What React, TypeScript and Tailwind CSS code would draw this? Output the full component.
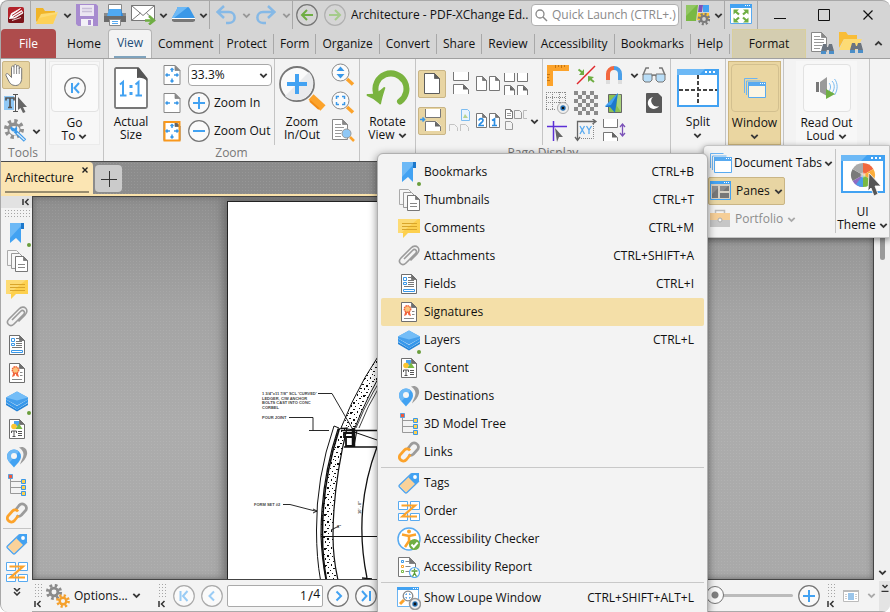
import React, { useState } from "react";
import clsx from "clsx";

function Svg({ w = 22, h, children }: { w?: number; h?: number; children: React.ReactNode }) {
  return (
    <svg width={w} height={h ?? w} viewBox={`0 0 ${w} ${h ?? w}`} fill="none" className="block shrink-0" aria-hidden="true">
      {children}
    </svg>
  );
}

// A sheet of paper with a folded corner
function Sheet({ x, y, w, h, f = 4, c = "#777" }: { x: number; y: number; w: number; h: number; f?: number; c?: string }) {
  return (
    <>
      <path d={`M${x} ${y}h${w - f}l${f} ${f}v${h - f}h${-w}z`} fill="#fff" stroke={c} />
      <path d={`M${x + w - f} ${y}v${f}h${f}z`} fill={c} stroke={c} strokeWidth={0.8} />
    </>
  );
}

function Chevron({ color = "#3a3a3a", up = false }: { color?: string; up?: boolean }) {
  return (
    <svg width="9" height="7" viewBox="0 0 9 7" className={clsx("inline-block shrink-0", up && "rotate-180")} fill="none" aria-hidden="true">
      <path d="M1.3 1.8 4.5 5l3.2-3.2" stroke={color} strokeWidth="1.8" />
    </svg>
  );
}

const Gear = ({ cx, cy, r, color, hole = "#f3f3f3" }: { cx: number; cy: number; r: number; color: string; hole?: string }) => (
  <>
    <circle cx={cx} cy={cy} r={r} stroke={color} strokeWidth={r * 0.5} strokeDasharray={`${r * 0.4} ${r * 0.385}`} />
    <circle cx={cx} cy={cy} r={r * 0.82} fill={color} />
    <circle cx={cx} cy={cy} r={r * 0.38} fill={hole} />
  </>
);

/* ---------- pane icons ---------- */

const BookmarkIcon = () => (
  <Svg>
    <path d="M4 1h14v6h-3v14l-5-5-6 5z" fill="#42a2f2" />
    <path d="M4 1h11v3L4 16z" fill="#6db9f6" />
    <path d="M15 1h3v6h-3z" fill="#1d78cb" />
  </Svg>
);

const ThumbnailsIcon = () => (
  <Svg>
    <path d="M1.500 15.500V.5h9l3 3" stroke="#aaa" fill="#f7f7f7" />
    <path d="M1.500 15.500H5" stroke="#aaa" />
    <path d="M5.500 18.500v-15h8l3 3M5.500 18.500H9" stroke="#999" fill="#f7f7f7" />
    <Sheet x={9.5} y={6.5} w={12} h={15} />
    <path d="M12 14.500h7M12 17.500h7" stroke="#888" />
  </Svg>
);

const CommentsIcon = () => (
  <Svg>
    <path d="M0 2h22v14H10l-5 5v-5H0z" fill="#fdd04e" />
    <path d="M0 2h20L3 16H0z" fill="#fddb74" />
    <path d="M4 6.500h15M4 9.500h15M4 12.500h15" stroke="#d9a52a" />
  </Svg>
);

const ClipIcon = () => (
  <Svg>
    <path d="M6 14 14.500 5.500c2.500-2.500 5.500.5 3 3L8 18c-4 4-9-1-5-5L13 3c5-5 11 1 6 6l-6.500 6.500" stroke="#9b9b9b" strokeWidth="1.6" />
  </Svg>
);

const FieldsIcon = () => (
  <Svg>
    <Sheet x={3.5} y={1.5} w={15} h={19} f={5} c="#6e6e6e" />
    <path d="M5.500 4.500h3v3h-3zM5.500 9.500h3v2h-3zM5.500 16.500h11v2h-11z" stroke="#3a98e8" />
    <path d="M10 4.500h3M10 7.500h6M10 9.500h6M10 11.500h6M6 13.500h10" stroke="#777" />
  </Svg>
);

const SignaturesIcon = () => (
  <Svg>
    <Sheet x={3.5} y={1.5} w={15} h={19} f={5} c="#6e6e6e" />
    <path d="m7.500 10-1.500 5 2.500-1 1-3 1 3 2.500 1-1.500-5z" fill="#f1633c" />
    <circle cx="9.500" cy="8" r="3.200" fill="#fcc27c" stroke="#f1633c" strokeWidth="1.500" strokeDasharray="1.500 .6" />
    <path d="M14 10.500h2.500M14 13.500h2.500M6 17.500h10" stroke="#888" />
  </Svg>
);

const LayersIcon = () => (
  <Svg>
    <path d="m0 13 11 6.500L22 13v2l-11 6.500L0 15z" fill="#2584d8" />
    <path d="m0 9.500 11 6.500 11-6.500v3L11 19.500 0 12.500z" fill="#3698ec" />
    <path d="m11 1.500 11 6v2l-11 6-11-6v-2z" fill="#459fec" />
    <path d="m11 1.500 11 6-11 3L0 7.500z" fill="#74bdf7" />
  </Svg>
);

const ContentIcon = () => (
  <Svg>
    <Sheet x={3.5} y={1.5} w={15} h={19} f={5} c="#6e6e6e" />
    <path d="M8 3h5v5H8z" fill="#4aa5f1" />
    <circle cx="8" cy="8.500" r="2.800" fill="#fbc531" />
    <path d="m13 5.500 3.500 5.500H9.500z" fill="#79b943" />
    <path d="M5.500 15v-2h5v2M8 13v5M6.500 18.500h3M12 13.500h4M12 15.500h4M12 17.500h4" stroke="#555" />
  </Svg>
);

const DestinationsIcon = () => (
  <Svg>
    <path d="M13 1.500c5-2 9 2 8 7-.7 4-4 7-7 10 1-4 3.500-7 3.500-10 0-3-1.500-5-4.500-7z" fill="#9b9b9b" />
    <path d="M8 3.500a7 7 0 0 1 7 7c0 4-4.500 8-7 11-2.500-3-7-7-7-11a7 7 0 0 1 7-7z" fill="#42a2f2" />
    <path d="M8 3.500a7 7 0 0 0-7 7c0 2 1 4 2.500 6L13 5.500a7 7 0 0 0-5-2z" fill="#6db9f6" />
    <circle cx="8" cy="10" r="3" fill="#f6f6f6" />
  </Svg>
);

const TreeIcon = () => (
  <Svg>
    <path d="M4.500 5v14.500H15M4.500 7.500H15M4.500 13.500H15" stroke="#999" />
    <path d="M2.500.5h4v4h-4z" fill="#f1593a" stroke="#5a9fdc" />
    <path d="M15.500 5.500h4v4h-4zM15.500 11.500h4v4h-4zM15.500 17.500h4v4h-4z" fill="#fdd04e" stroke="#3a98e8" />
  </Svg>
);

const LinksIcon = () => (
  <Svg>
    <path d="m9.500 8 3.500-4.500c3-3.500 9-.5 7 4.500l-4.500 5c-1.500 1.500-3.500 1.500-5 .5" stroke="#9b9b9b" strokeWidth="2.700" />
    <path d="m12.500 13.500-4 5c-3 3.500-9 0-6.500-4.500l4.500-5c1.500-1.500 4-1.500 5.500.5" stroke="#fca32b" strokeWidth="2.700" />
  </Svg>
);

const TagsIcon = () => (
  <Svg>
    <path d="M12 3.500 1.500 13.500l6.500 7L19.500 11z" fill="#fad29a" />
    <path d="M13.500 1H21v8l-3.500 3.500-7-7z" fill="#42a2f2" />
    <path d="M13.500 1.500 1.500 13q-1 1 0 2l5.500 5.500q1 1 2 0L21 9" stroke="#4fa3ec" strokeWidth="1.300" />
    <circle cx="17" cy="5" r="1.900" fill="#fff" />
  </Svg>
);

const OrderIcon = () => (
  <Svg>
    <path d="M.5 1.500h9v8h-9zM12.500 1.500h9v8h-9zM.5 13.500h9v7h-9zM12.500 13.500h9v7h-9z" fill="#fff" stroke="#58aaf0" />
    <path d="M3.500 5.500H17L4.500 16.500H19" stroke="#fca32b" strokeWidth="2.200" />
  </Svg>
);

const CheckerIcon = () => (
  <Svg w={24}>
    <circle cx="12" cy="12" r="11" fill="#fff" stroke="#58aaf0" strokeWidth="1.500" />
    <circle cx="12" cy="4.500" r="2" fill="#fca32b" />
    <path d="M5 7.500 12 9l7-1.500M12 9v5l-4 6M12 13l3 5" stroke="#fca32b" strokeWidth="2.500" />
    <circle cx="17.500" cy="17.500" r="5.500" fill="#6fae43" />
    <path d="m14.500 17.500 2.200 2.500 4-4.500" stroke="#fff" strokeWidth="2" />
  </Svg>
);

const ReportIcon = () => (
  <Svg>
    <Sheet x={0.5} y={1.5} w={17} h={19} f={6} c="#777" />
    <path d="M3.500 4.500h2v2h-2z" stroke="#3a98e8" />
    <path d="M3.500 9.500h2v2h-2z" stroke="#fca32b" />
    <path d="M3.500 14.500h2v2h-2z" stroke="#79b943" />
    <path d="M7.500 5.500h4M7.500 10.500h5M7.500 15.500h4" stroke="#888" />
    <circle cx="16.500" cy="16.500" r="5" fill="#fff" stroke="#58aaf0" strokeWidth="1.200" />
    <path d="M13.500 15h6M16.500 15v2l-2 3.500M16.500 17l2 3.500M16.500 12.500v1.500" stroke="#5b9e36" strokeWidth="1.300" />
  </Svg>
);

const LoupeIcon = () => (
  <Svg w={24}>
    <path d="M.5 1.500h21v19H.5z" fill="#fff" stroke="#6cb4f2" />
    <path d="M0 1h22v3H0z" fill="#42a2f2" />
    <path d="M16 2.500h1M18 2.500h1M20 2.500h1" stroke="#fff" />
    <path d="m3 18 4-4" stroke="#fca32b" strokeWidth="3" />
    <circle cx="11" cy="10" r="4.800" fill="#fff" stroke="#888" strokeWidth="1.300" />
    <path d="M9 9V8h1M12 8h1v1M13 11v1h-1M10 12H9v-1" stroke="#2b8de2" />
    <circle cx="18" cy="18" r="5.500" fill="#eee" stroke="#999" strokeWidth="1.500" />
    <circle cx="18" cy="18" r="2.700" fill="#2573b8" />
    <circle cx="18" cy="18" r="1.400" fill="#111" />
  </Svg>
);

/* ---------- title bar icons ---------- */

const AppIcon = () => (
  <Svg w={18}>
    <rect x="1" y="1" width="16" height="16" rx="2" fill="#b3232b" />
    <path d="M1 12 17 5v10a2 2 0 0 1-2 2H3a2 2 0 0 1-2-2z" fill="#7b151b" />
    <path d="m2.500 12.500 2-5 9-5-7 6.500zM2.500 12.500l4-3.500 8-4.500 1.500 2.500-8 5zM5 14.500l9-3" stroke="#fff" fill="#fff" strokeWidth=".8" />
    <path d="m5 9.500 8.500-5.500M6.500 11 15 6" stroke="#a31f27" strokeWidth=".9" />
  </Svg>
);

const OpenIcon = () => (
  <Svg w={24} h={20}>
    <path d="M1 3h7l2 3h10v4L3 18 1 16z" fill="#f0b429" />
    <path d="m6 9 17-2-5 12H1z" fill="#fddb74" />
    <path d="M18 19h-17l3-6 18-4z" fill="#fdd158" />
  </Svg>
);

const SaveIcon = () => (
  <Svg>
    <path d="M0 0h20l2 2v20H2l-2-2z" fill="#a78bcf" />
    <path d="M4 1h14v11H4z" fill="#ebe6f2" />
    <path d="M6 4.500h10M6 7.500h10" stroke="#c7bdd8" strokeWidth="1.500" />
    <path d="M5 15h12v7H5z" fill="#f3f0f7" />
    <path d="M12 16h3v5h-3z" fill="#a78bcf" />
  </Svg>
);

const PrintIcon = () => (
  <Svg>
    <path d="M4.500.5h13v7h-13z" fill="#fff" stroke="#888" />
    <path d="M0 9h22v9H0z" fill="#6b6b6b" />
    <path d="M0 9h4v3H0zM18 9h4v3h-4z" fill="#8b8b8b" />
    <path d="M5 5h12v7H3z" fill="#4fa9f2" />
    <path d="M17 5v7h2z" fill="#2e8be0" />
    <path d="M5.500 15.500h11v6h-11z" fill="#fff" stroke="#888" />
    <path d="M8 17.500h6M8 19.500h6" stroke="#58aaf0" />
  </Svg>
);

const MailIcon = () => (
  <Svg w={25} h={20}>
    <path d="M.5.5h23v15H.5z" fill="#fff" stroke="#777" />
    <path d="m.5.5 11.500 10 11.500-10M.5 15.500l9-7.500M23.500 15.500l-8-7.500" stroke="#777" />
    <path d="M14 15.500h7M18 11l5 4.500-5 4" stroke="#6fae43" strokeWidth="2.500" />
  </Svg>
);

const ScanIcon = () => (
  <Svg w={25} h={18}>
    <path d="M7 1h10q1 0 2 2l5 9H1l5-9q0-2 1-2z" fill="#3a98e8" />
    <path d="M7 1h10L3 12H1l5-9q0-2 1-2z" fill="#6db9f6" />
    <path d="M1 12h23v1.500H1z" fill="#fff" />
    <path d="M1 13h23v2l-2 1H3l-2-1z" fill="#777" />
  </Svg>
);

const UndoIcon = () => (
  <Svg w={20} h={20}>
    <path d="M8 1 1.500 7 8 13M2 7h11c7.500 0 7.500 11 0 11h-3" stroke="#86b9e6" strokeWidth="2.500" />
  </Svg>
);

const RedoIcon = () => (
  <Svg w={20} h={20}>
    <path d="m12 1 6.500 6-6.500 6M18 7H7c-7.500 0-7.500 11 0 11h3" stroke="#86b9e6" strokeWidth="2.500" />
  </Svg>
);

const NavArrowIcon = ({ back }: { back?: boolean }) => (
  <Svg>
    <circle cx="11" cy="11" r="10.300" stroke={back ? "#777" : "#b0b0b0"} strokeWidth="1.200" />
    <path d={back ? "M17 11H6M11 6l-5 5 5 5" : "M5 11h11M11 6l5 5-5 5"} stroke={back ? "#6fae43" : "#a5cb8b"} strokeWidth="2" />
  </Svg>
);

const UiOptionsIcon = () => (
  <Svg w={24}>
    <path d="M0 2h12L10 18H0z" fill="#79b943" />
    <path d="M0 2h11L0 13z" fill="#92c763" />
    <path d="M13 2h4l-1 7h-4z" fill="#7b52b8" />
    <path d="M17 2h6v7h-6z" fill="#42a2f2" />
    <path d="M12 10h11v7H11z" fill="#fbc531" />
    <Gear cx={18} cy={16} r={5} color="#7b7b7b" hole="#d5d5d5" />
  </Svg>
);

const FullScreenIcon = () => (
  <Svg>
    <path d="M.5.5h21v19H.5z" fill="#fff" stroke="#58aaf0" />
    <path d="M0 0h22v4H0z" fill="#42a2f2" />
    <path d="M15 1.500h1M17 1.500h1M19 1.500h1" stroke="#fff" />
    <path d="m5 7 4 3.500M17 7l-4 3.500M5 17l4-3.500M17 17l-4-3.500" stroke="#6fae43" strokeWidth="2.300" />
    <path d="M3.500 5.500H9l-5.500 5zM18.500 5.500H13l5.500 5zM3.500 18.500H9l-5.500-5zM18.500 18.500H13l5.500-5z" fill="#6fae43" />
  </Svg>
);

const Binoculars = ({ x, y }: { x: number; y: number }) => (
  <g transform={`translate(${x} ${y})`}>
    <path d="M2 0h3l1 3h1l1-3h3l2 7v3H8V6H5v4H0V7z" fill="#6b7480" />
    <path d="M0 7h5v3H0zM8 7h5v3H8z" fill="#4b8ec8" />
  </g>
);

const FindIcon = () => (
  <Svg w={24}>
    <Sheet x={1.5} y={0.5} w={15} h={19} f={5} c="#888" />
    <path d="M4 4.500h6M4 7.500h10M4 10.500h10M4 13.500h8M4 16.500h6" stroke="#999" />
    <Binoculars x={11} y={12} />
  </Svg>
);

const FindFolderIcon = () => (
  <Svg w={26}>
    <path d="M2 1h7l2 3h9v4H7L2 17z" fill="#f9bd37" />
    <path d="M7 8h18l-6 11H2z" fill="#fddb74" />
    <Binoculars x={13} y={12} />
  </Svg>
);

/* ---------- ribbon icons ---------- */

const HandIcon = () => (
  <Svg w={24}>
    <path
      d="M7.500 12V4.500c0-2 2.500-2 2.500 0V3c0-2 2.600-2 2.600 0v1c0-2 2.600-2 2.600 0v2c0-2 2.500-2 2.500 0v9c0 4-2 7.500-6 7.500-4.500 0-6-2.500-7.500-5.500L2 12.500c-.8-2 1.500-2.500 2.500-1.200l3 3.200z"
      fill="#fff"
      stroke="#777"
    />
    <path d="M10 4.500V11M12.600 4v7M15.200 6v5" stroke="#888" />
  </Svg>
);

const SelectTextIcon = () => (
  <Svg w={26} h={22}>
    <path d="M1 4h10v14H1z" fill="#8fc8f6" />
    <path d="M3 8.500V6h8v2.500M7 6v9M5 15.500h4" stroke="#555" strokeWidth="1.700" />
    <path d="M10 2.500h5M12.500 3v16M10 19.500h5" stroke="#555" />
    <path d="m15 5 9 10h-4l2.500 5-2.500 1-2.500-5-2.500 2z" fill="#666" />
  </Svg>
);

const WrenchIcon = () => (
  <Svg w={24}>
    <Gear cx={10} cy={10} r={8} color="#8f8f8f" />
    <path d="M5.500 10a5 5 0 1 0 8-3l-2.500 3-2-1z" fill="#f3f3f3" />
    <path d="m11 12 10 9.500" stroke="#3a98e8" strokeWidth="3.500" />
    <path d="m13 14 7.500 7" stroke="#d8ecfc" strokeWidth="1.300" />
    <path d="M7 7.500c-2 3 2 6.500 5 4.500 1.500-1 1.500-3 .5-4.500l-2 2-2-1z" fill="#3a98e8" />
  </Svg>
);

const CircleIcon = ({ d, color = "#42a2f2", ring = "#777" }: { d: string; color?: string; ring?: string }) => (
  <Svg>
    <circle cx="11" cy="11" r="10.300" fill="#fafafa" stroke={ring} strokeWidth="1.200" />
    <path d={d} stroke={color} strokeWidth="2" />
  </Svg>
);

const ActualSizeIcon = () => (
  <Svg w={34} h={42}>
    <path d="M1 2.500Q1 1 2.500 1H24l9 11v27.500q0 1.500-1.500 1.500h-29Q1 41 1 39.500z" fill="#fff" stroke="#777" strokeWidth="1.800" />
    <path d="M23 1h2l8 10v3q-4-4-10-3z" fill="#555" />
    <path d="m6 17.500 3-2.500v14M6 28.500h6.500M21.500 17.500l3-2.500v14M21.500 28.500H28" stroke="#42a2f2" strokeWidth="2" />
    <path d="M15.500 18h3v3h-3zM15.500 25h3v3h-3z" fill="#42a2f2" />
  </Svg>
);

const FitIcon = ({ mode }: { mode: "page" | "width" | "visible" }) => (
  <Svg w={18} h={22}>
    <Sheet x={1} y={1.5} w={16} h={19} f={5} c={mode === "visible" ? "#666" : "#888"} />
    {mode === "visible" && <path d="M1.500 2h15v18.500h-15z" stroke="#f9981c" strokeWidth="2" />}
    {mode !== "width" && <path d="M9 4.500V8M7.500 6 9 4.500 10.500 6M9 18v-3.500M7.500 16.500 9 18l1.500-1.500" stroke="#3a98e8" strokeWidth="1.500" />}
    <path d="M3 11h4M4.500 9.500 3 11l1.500 1.500M15 11h-4M13.500 9.500 15 11l-1.500 1.500" stroke="#3a98e8" strokeWidth="1.500" />
  </Svg>
);

const ZoomBigIcon = () => (
  <Svg w={48} h={46}>
    <path d="m33 32 12 11" stroke="#fca32b" strokeWidth="7.500" />
    <path d="m32 36 9 8" stroke="#f18c16" strokeWidth="2" />
    <circle cx="19" cy="19" r="17" fill="#fafafa" stroke="#777" strokeWidth="1.800" />
    <path d="M31 7A17 17 0 0 1 7 31z" fill="#e9eaec" />
    <path d="M9 19h20M19 9v20" stroke="#42a2f2" strokeWidth="4" />
  </Svg>
);

const SmallLens = ({ children }: { children: React.ReactNode }) => (
  <Svg w={24}>
    <path d="m16 16 6 5.500" stroke="#fca32b" strokeWidth="3.500" />
    <circle cx="9.500" cy="9.500" r="8.500" fill="#fbfbfb" stroke="#888" />
    {children}
  </Svg>
);

const PageLensIcon = () => (
  <Svg w={24}>
    <Sheet x={1.5} y={0.5} w={15} h={20} f={5} c="#888" />
    <path d="M4 5.500h6M4 8.500h9M4 11.500h7M4 14.500h6M4 17.500h6" stroke="#999" />
    <path d="m19 18 4 4" stroke="#fca32b" strokeWidth="2.500" />
    <circle cx="15.500" cy="14.500" r="4.500" fill="#8fc8f6" stroke="#999" />
  </Svg>
);

const RotateIcon = () => (
  <Svg w={44} h={38}>
    <path d="M10 24A15.500 15.500 0 1 1 34 32.500" stroke="#7ab33f" strokeWidth="6" strokeLinecap="round" />
    <path d="M1 25q9 1 17-7 2 0 1 2-3 9-4 15-1 1-2-.5-5-5-12-7.500-1-1 0-2z" fill="#7ab33f" />
  </Svg>
);

const OpenDot = () => <span className="absolute right-0 bottom-0 size-1 rounded-full bg-[#6a9d3c]" />;

const SinglePage = () => (
  <Svg w={18} h={22}>
    <Sheet x={1.5} y={0.5} w={15} h={20} f={5} c="#5c5c5c" />
  </Svg>
);

const ContinuousPage = ({ arrow }: { arrow?: boolean }) => (
  <Svg w={24}>
    <path d="M5 0h16v9H5zM5 12h11l5 5v5H5z" fill="#fff" />
    <path d="M5.500 0v8.500h15V0M5.500 22v-9.500h10l5 5V22" stroke="#777" />
    <path d="M15 12.500v5h5.500z" fill="#666" />
    {arrow && <path d="M0 10.500h4M2.500 8.500l2 2-2 2" stroke="#3a98e8" strokeWidth="1.600" />}
  </Svg>
);

const TwoPages = ({ numbered }: { numbered?: boolean }) => (
  <Svg w={26} h={18}>
    <Sheet x={1.5} y={1.5} w={10} h={14} />
    <Sheet x={14.5} y={1.5} w={10} h={14} />
    {numbered && (
      <path d="M4 8.500c0-2.500 4-2.500 4 0 0 2-4 3-4 5h5M17 8.500l2.500-1.500v6.500M17 13.500h5" stroke="#2b8de2" strokeWidth="1.700" />
    )}
  </Svg>
);

const TwoContinuous = () => (
  <Svg w={26} h={22}>
    <path d="M1.500 0v8.500h10V0M14.500 0v8.500h10V0" fill="#fff" stroke="#777" />
    <path d="M1.500 22v-9.500h6l4 4V22M14.500 22v-9.500h6l4 4V22" fill="#fff" stroke="#777" />
    <path d="M7 12.500v5h5zM20 12.500v5h5z" fill="#666" />
  </Svg>
);

const SplitPagesIcon = () => (
  <Svg w={24}>
    <path d="M13.500.5h6l2 2v9h-8z" fill="#eaf4fd" stroke="#7dbcf0" />
    <path d="m15 9 2-4 3 4z" fill="#b7d38f" />
    <path d="M1.500 22v-6.500h5l3 3V22M12.500 22v-6.500h5l3 3V22" stroke="#c3c3c3" />
  </Svg>
);

const PageLayoutIcon = () => (
  <Svg w={24}>
    <Sheet x={1.5} y={0.5} w={7} h={9} f={2} />
    <path d="M3 4.500h4M3 6.500h4" stroke="#999" />
    <path d="M10.500 1.500h5l2 2v6h-7zM1.500 12.500h5l2 2v6h-7z" stroke="#999" />
    <path d="M23 1.500h-3.500v8H23" stroke="#bbb" />
  </Svg>
);

const RulerIcon = () => (
  <Svg>
    <path d="M0 1h22v6H6v15H0z" fill="#fca32b" />
    <path d="M8.500 1v3M11.500 1v2M14.500 1v3M17.500 1v2M0 10.500h3M0 13.500h2M0 16.500h3" stroke="#c77611" />
  </Svg>
);

const GuidesIcon = () => (
  <Svg w={20}>
    <path d="M1 19 19 1" stroke="#e0262b" strokeWidth="1.500" />
    <path d="M2.500 4.500 7 8M18 17l-5-4" stroke="#6fae43" strokeWidth="2" />
    <path d="M8 4v6H3zM12 11v6l6-5z" fill="#6fae43" />
  </Svg>
);

const MagnetIcon = () => (
  <Svg w={18} h={20}>
    <path d="M3 17V9a6 6 0 0 1 6-6" stroke="#f2683f" strokeWidth="4" />
    <path d="M15 17V9a6 6 0 0 0-6-6" stroke="#4a9fe8" strokeWidth="4" />
    <path d="M1 15h4v4H1zM13 15h4v4h-4z" fill="#ddd" />
  </Svg>
);

const GlassesIcon = () => (
  <Svg w={24} h={18}>
    <path d="M1 8h9v6l-2 2H3l-2-2zM14 8h9v6l-2 2h-5l-2-2z" fill="#b8ddf7" stroke="#777" />
    <path d="M10 10c1-1.500 3-1.500 4 0M1 9l3-7h3M23 9l-3-7h-3" stroke="#777" strokeWidth="1.500" />
  </Svg>
);

const GridEyeIcon = () => (
  <Svg w={24}>
    <path d="M0 1.500h20M0 6.500h20M0 11.500h20M0 18.500h10M.5 1v18M6.500 1v18M13.500 1v12M19.500 1v12" stroke="#888" strokeDasharray="1 1" />
    <circle cx="17" cy="17" r="5.500" fill="#eee" stroke="#aaa" />
    <circle cx="17" cy="17" r="2.700" fill="#2573b8" />
    <circle cx="17" cy="17" r="1.300" fill="#111" />
  </Svg>
);

const CheckerboardIcon = () => (
  <Svg w={24}>
    <defs>
      <pattern id="checks" width="8" height="8" patternUnits="userSpaceOnUse">
        <path d="M0 0h4v4H0zM4 4h4v4H4z" fill="#8b8b8b" />
      </pattern>
    </defs>
    <path d="M0 0h24v24H0z" fill="url(#checks)" />
  </Svg>
);

const WrapIcon = () => (
  <Svg w={18} h={22}>
    <path d="M3.500 2.500h13v18h-13z" fill="#8cc152" stroke="#666" />
    <path d="M12 2v12l4 6V3z" fill="#a9d37c" />
    <path d="M13 1 0 15h5l5 6z" fill="#1d78cb" />
    <path d="M13 1 0 14l6-1z" fill="#42a2f2" />
  </Svg>
);

const MoonIcon = () => (
  <Svg w={18} h={22}>
    <path d="M1 2q0-1 1-1h11l4 4v15q0 1-1 1H2q-1 0-1-1z" fill="#595959" />
    <path d="M8 5a6 6 0 1 0 6 9 5.500 5.500 0 0 1-6-9z" fill="#fff" />
  </Svg>
);

const CrossCursorIcon = () => (
  <Svg>
    <path d="M0 6.500h20M6.500 1v20" stroke="#5b2fd6" strokeWidth="1.500" />
    <path d="m8 8 8 9h-4l-2 5z" fill="#666" />
  </Svg>
);

const XyIcon = () => (
  <Svg w={24}>
    <path d="M3.500 20V2.500H21M18.500 0 22 2.500 18.500 5M1 18l2.500 3.500L6 18" stroke="#666" strokeWidth="1.300" />
    <path d="M19.500 5v14.500H6" stroke="#888" strokeDasharray="1 1" />
    <path d="m6 7 4.500 8M10.500 7 6 15M12.500 7l2.500 4 2.500-4M15 11v4" stroke="#58aaf0" strokeWidth="1.300" />
  </Svg>
);

const PageGapIcon = () => (
  <Svg w={24}>
    <path d="M1.500 0v8.500h14V0" fill="#fff" stroke="#777" />
    <path d="M1.500 22v-8.500h9l5 5V22" fill="#fff" stroke="#777" />
    <path d="M10 13v5.500h5.500z" fill="#666" />
    <path d="M20.500 6v10M18 8l2.500-3L23 8M18 14l2.500 3 2.500-3" stroke="#7b52b8" strokeWidth="1.300" />
  </Svg>
);

const SplitIcon = () => (
  <Svg w={42} h={38}>
    <rect x="1" y="1" width="40" height="36" fill="#fff" stroke="#42a2f2" strokeWidth="2" />
    <path d="M0 0h42v6H0z" fill="#42a2f2" />
    <path d="M0 0h28l-6 6H0z" fill="#6db9f6" />
    <path d="M28 3h2M32 3h2M36 3h2" stroke="#fff" strokeWidth="2" />
    <path d="M2 21h38M21 6v30" stroke="#444" strokeWidth="2" strokeDasharray="4 2" />
  </Svg>
);

const WindowsIcon = ({ fill = "#fff" }: { fill?: string }) => (
  <Svg w={22} h={20}>
    <path d="M.5 15V.5h13M2.500 17V3h14" stroke="#6cb4f2" />
    <path d="M4.500 5.500h17v14h-17z" fill={fill} stroke="#58aaf0" />
    <path d="M4 4h18v4H4z" fill="#58aaf0" />
    <path d="M16 5.500h1M18 5.500h1M20 5.500h1" stroke="#fff" />
  </Svg>
);

const SpeakerIcon = () => (
  <Svg w={24}>
    <path d="M1 6h3v10H1z" fill="#777" />
    <path d="m5 6 7-5v19l-7-4z" fill="#9a9a9a" />
    <path d="M14 7c2 2 2 6 0 8M17 5c3 3 3 8 0 12M19.500 3c3.500 4 3.500 11 0 16" stroke="#79bbf0" />
    <path d="m11 13 9 5-9 5z" fill="#6fae43" />
  </Svg>
);

const PanesIcon = () => (
  <Svg>
    <path d="M.5 1.500h20v18H.5z" fill="#d5d0c4" stroke="#42a2f2" />
    <path d="M0 1h21v3H0z" fill="#42a2f2" />
    <path d="M14 2.500h1M16 2.500h1M18 2.500h1" stroke="#fff" />
    <path d="M2 6h6v12H2zM10 6h9v5h-9zM10 13h9v5h-9z" fill="#777" />
    <path d="m2 14 6-6v-2H2zM10 6h8l-5 5h-3z" fill="#8d8d8d" />
  </Svg>
);

const PortfolioIcon = () => (
  <Svg>
    <path d="M6.500 6V2.500h9V6" stroke="#bbb" strokeWidth="1.500" />
    <path d="M1 5h20v7H1z" fill="#f5ce97" />
    <path d="M1 12h20v7H1z" fill="#c6c6c6" />
    <circle cx="11" cy="12" r="2" fill="#f5f5f5" stroke="#aaa" />
  </Svg>
);

const UiThemeIcon = () => (
  <Svg w={44} h={42}>
    <path d="M1 1h42v36H1z" fill="#fff" stroke="#42a2f2" strokeWidth="2" />
    <path d="M0 0h44v6H0z" fill="#42a2f2" />
    <path d="M0 0h26l-6 6H0z" fill="#6db9f6" />
    <path d="M30 3h2M34 3h2M38 3h2" stroke="#fff" strokeWidth="2" />
    <path d="M22 20V8a12 12 0 0 1 10.400 6z" fill="#f2683f" />
    <path d="M22 20l10.400-6a12 12 0 0 1 0 12z" fill="#fcae3c" />
    <path d="M22 20l10.400 6A12 12 0 0 1 22 32z" fill="#79b943" />
    <path d="M22 20v12a12 12 0 0 1-10.400-6z" fill="#8f6cc4" />
    <path d="M22 20l-10.400 6a12 12 0 0 1 0-12z" fill="#7a7a7a" />
    <path d="M22 20 11.600 14A12 12 0 0 1 22 8z" fill="#aaa" />
    <path d="M22 32a12 12 0 0 1-7-2.500L22 20z" fill="#4a9fe8" />
    <circle cx="22" cy="20" r="2.500" fill="#fff" fillOpacity=".5" />
    <path d="m28 18 12 13h-6l3 8-4 2-3-8-3 3z" fill="#555" stroke="#fff" strokeWidth=".8" />
  </Svg>
);

const OptionsIcon = () => (
  <Svg w={24}>
    <Gear cx={8} cy={8} r={6.5} color="#8b8b8b" />
    <Gear cx={17} cy={17} r={5.5} color="#f5a02c" />
  </Svg>
);

/* ---------- data ---------- */

const tabs = ["Comment", "Protect", "Form", "Organize", "Convert", "Share", "Review", "Accessibility", "Bookmarks", "Help"];

type Pane = { label: string; keys?: string; icon: () => React.ReactElement; dot?: boolean };

const panes: Pane[] = [
  { label: "Bookmarks", keys: "CTRL+B", icon: BookmarkIcon, dot: true },
  { label: "Thumbnails", keys: "CTRL+T", icon: ThumbnailsIcon },
  { label: "Comments", keys: "CTRL+M", icon: CommentsIcon },
  { label: "Attachments", keys: "CTRL+SHIFT+A", icon: ClipIcon },
  { label: "Fields", keys: "CTRL+I", icon: FieldsIcon },
  { label: "Signatures", icon: SignaturesIcon },
  { label: "Layers", keys: "CTRL+L", icon: LayersIcon, dot: true },
  { label: "Content", icon: ContentIcon },
  { label: "Destinations", icon: DestinationsIcon },
  { label: "3D Model Tree", icon: TreeIcon },
  { label: "Links", icon: LinksIcon },
];

const structurePanes: Pane[] = [
  { label: "Tags", icon: TagsIcon },
  { label: "Order", icon: OrderIcon },
];

const accessibilityPanes: Pane[] = [
  { label: "Accessibility Checker", icon: CheckerIcon },
  { label: "Accessibility Report", icon: ReportIcon },
];

/* ---------- window parts ---------- */

function IconButton({ label, className, children }: { label: string; className?: string; children: React.ReactNode }) {
  return (
    <button type="button" aria-label={label} className={clsx("flex shrink-0 items-center justify-center", className)}>
      {children}
    </button>
  );
}

const TitleRule = () => <span className="h-7 w-px shrink-0 bg-[#a8a8a8]" />;

function TitleBar() {
  return (
    <header className="flex h-7 items-center">
      <span className="flex w-[29px] shrink-0 justify-center"><AppIcon /></span>
      <TitleRule />
      <IconButton label="Open" className="w-8"><OpenIcon /></IconButton>
      <IconButton label="Recent files" className="w-2"><Chevron /></IconButton>
      <IconButton label="Save" className="w-8"><SaveIcon /></IconButton>
      <IconButton label="Print" className="w-6"><PrintIcon /></IconButton>
      <IconButton label="Send" className="w-8"><MailIcon /></IconButton>
      <IconButton label="Send options" className="w-2"><Chevron /></IconButton>
      <IconButton label="Scan" className="w-8"><ScanIcon /></IconButton>
      <IconButton label="Scan options" className="mr-0.5 w-2"><Chevron /></IconButton>
      <TitleRule />
      <IconButton label="Undo" className="w-8"><UndoIcon /></IconButton>
      <IconButton label="Undo list" className="w-2"><Chevron color="#999" /></IconButton>
      <IconButton label="Redo" className="w-8"><RedoIcon /></IconButton>
      <IconButton label="Redo list" className="mr-0.5 w-2"><Chevron color="#999" /></IconButton>
      <TitleRule />
      <IconButton label="Back" className="w-7"><NavArrowIcon back /></IconButton>
      <IconButton label="Forward" className="w-7"><NavArrowIcon /></IconButton>
      <h1 className="ml-0.5 min-w-0 flex-1 overflow-hidden whitespace-nowrap">Architecture - PDF-XChange Ed..</h1>
      <label className="mr-0.5 flex h-[22px] w-[148px] shrink-0 items-center gap-1 rounded-sm border border-[#b0b0b0] bg-white px-0.5">
        <Svg w={14}>
          <circle cx="6" cy="6" r="4" stroke="#888" strokeWidth="1.300" />
          <path d="m9 9 4 4" stroke="#888" strokeWidth="1.500" />
        </Svg>
        <input aria-label="Quick Launch" placeholder="Quick Launch (CTRL+.)" className="w-full min-w-0 bg-transparent outline-none placeholder:text-[#8a8a8a]" />
      </label>
      <TitleRule />
      <IconButton label="UI options" className="w-8"><UiOptionsIcon /></IconButton>
      <IconButton label="UI options list" className="mr-0.5 w-2"><Chevron /></IconButton>
      <TitleRule />
      <IconButton label="Full screen" className="w-8"><FullScreenIcon /></IconButton>
      <TitleRule />
      <IconButton label="Minimize" className="w-11"><Svg w={12}><path d="M0 9.500h12" stroke="#111" /></Svg></IconButton>
      <IconButton label="Maximize" className="w-11"><Svg w={12}><path d="M.5.5h11v11H.5z" stroke="#111" /></Svg></IconButton>
      <IconButton label="Close" className="w-11"><Svg w={10}><path d="m.5.5 9 9M9.500.5l-9 9" stroke="#111" strokeWidth="1.200" /></Svg></IconButton>
    </header>
  );
}

function TabRow() {
  return (
    <nav className="flex h-[30px] items-end border-b border-[#a0a0a0] whitespace-nowrap">
      <button type="button" className="h-[29px] w-[55px] shrink-0 rounded-t-sm bg-[#ae4c4c] text-white">File</button>
      <button type="button" className="h-[29px] w-[52px] shrink-0 pl-1">Home</button>
      <button type="button" className="flex h-[29px] w-11 shrink-0 flex-col items-center justify-between rounded-t-sm border border-b-0 border-[#b4b4b4] bg-[#f3f3f3] text-[#1e4e79]">
        <span className="pt-[5px]">View</span>
        <span className="h-0.5 w-8 bg-[#7fa3bd]" />
      </button>
      <div className="flex h-[29px] min-w-0 flex-1 items-center">
        {tabs.map((tab) => (
          <button key={tab} type="button" className="h-5 flex-auto border-r border-[#a8a8a8]">
            {tab}
          </button>
        ))}
      </div>
      <button type="button" className="ml-0.5 h-[29px] w-[74px] shrink-0 border border-b-0 border-[#d9cf9d] bg-[#d4cdb0]">Format</button>
      <IconButton label="Find" className="h-[29px] w-8"><FindIcon /></IconButton>
      <IconButton label="Search in files" className="h-[29px] w-6"><FindFolderIcon /></IconButton>
      <IconButton label="Collapse ribbon" className="h-[29px] w-7 pl-1"><Chevron up /></IconButton>
    </nav>
  );
}

const Rule = () => <span className="h-[86px] w-px shrink-0 bg-[#c4c4c4]" />;
const GroupRule = () => <span className="w-px shrink-0 self-stretch bg-[#c4c4c4]" />;

function Group({ label, children }: { label?: string; children: React.ReactNode }) {
  return (
    <section className="flex shrink-0 flex-col">
      <div className="flex h-[86px]">{children}</div>
      {label && <h2 className="text-center leading-4 text-[#777]">{label}</h2>}
    </section>
  );
}

// One or two lines; a one-line caption carries its arrow underneath
function Caption({ text, arrow }: { text: string; arrow?: boolean }) {
  return (
    <span className="text-center leading-[13px] whitespace-pre">
      {text}
      {arrow && (text.includes("\n") ? " " : "\n")}
      {arrow && <Chevron />}
    </span>
  );
}

// Tall ribbon command: drawing above, caption below
function BigButton({ icon, text, arrow, className }: { icon: React.ReactNode; text: string; arrow?: boolean; className?: string }) {
  return (
    <button type="button" className={clsx("flex shrink-0 flex-col items-center pt-1.5", className)}>
      <span className="mb-1 flex h-[46px] items-center">{icon}</span>
      <Caption text={text} arrow={arrow} />
    </button>
  );
}

function CardButton({ icon, text, active, className }: { icon: React.ReactNode; text: string; active?: boolean; className?: string }) {
  return (
    <button
      type="button"
      className={clsx(
        "mt-0.5 flex h-[84px] shrink-0 flex-col items-center border pt-0.5",
        active ? "border-[#cdb67f] bg-[#ead6a1]" : "border-[#ebebeb] bg-[#f7f7f7]",
        className,
      )}
    >
      <span className={clsx("mb-1 flex h-12 w-12 items-center justify-center rounded-sm border", active ? "border-[#d3c08f]" : "border-[#e2e2e2] bg-[#fafafa]")}>
        {icon}
      </span>
      <Caption text={text} arrow />
    </button>
  );
}

const cell = "h-7 w-7";
const pressed = "rounded-xs border border-[#c9b585] bg-[#e8d5a3]";

function Ribbon() {
  const [zoom, setZoom] = useState("33.3%");

  return (
    <div className="flex h-[103px] shrink-0 overflow-hidden border-b border-[#4a4a4a] bg-[#f3f3f3]">
      <Group label="Tools">
        <div className="flex w-[44px] flex-col pt-0.5 pl-px">
          <IconButton label="Hand tool" className={clsx(cell, pressed)}><HandIcon /></IconButton>
          <IconButton label="Select text" className={cell}><SelectTextIcon /></IconButton>
          <div className="flex items-center gap-0.5">
            <IconButton label="Other tools" className={cell}><WrenchIcon /></IconButton>
            <Chevron />
          </div>
        </div>
      </Group>
      <GroupRule />
      <Group>
        <CardButton className="mx-[3px] w-[51px]" icon={<CircleIcon d="M8 6v10M15 6l-4.500 5 4.500 5" />} text={"Go\nTo"} />
      </Group>
      <GroupRule />
      <Group label="Zoom">
        <BigButton className="w-[54px]" icon={<ActualSizeIcon />} text={"Actual\nSize"} />
        <div className="flex flex-col pt-0.5">
          <IconButton label="Fit page" className={cell}><FitIcon mode="page" /></IconButton>
          <IconButton label="Fit width" className={cell}><FitIcon mode="width" /></IconButton>
          <IconButton label="Fit visible" className={cell}><FitIcon mode="visible" /></IconButton>
        </div>
        <div className="flex w-[88px] flex-col pt-0.5 pl-0.5">
          <div className="flex h-7 items-center">
            <div className="relative w-[84px]">
              <select
                aria-label="Zoom level"
                value={zoom}
                onChange={(e) => setZoom(e.target.value)}
                className="block h-[22px] w-full appearance-none rounded-sm border border-[#a8a8a8] bg-white px-0.5 outline-none"
              >
                <option>33.3%</option>
                <option>50%</option>
                <option>100%</option>
              </select>
              <span className="pointer-events-none absolute inset-y-0 right-1 flex items-center"><Chevron /></span>
            </div>
          </div>
          <button type="button" className="flex h-7 items-center gap-1 whitespace-nowrap">
            <CircleIcon d="M5 11h12M11 5v12" />
            Zoom In
          </button>
          <button type="button" className="flex h-7 items-center gap-1 whitespace-nowrap">
            <CircleIcon d="M5 11h12" />
            Zoom Out
          </button>
        </div>
        <Rule />
        <BigButton className="w-[54px]" icon={<ZoomBigIcon />} text={"Zoom\nIn/Out"} />
        <div className="flex w-[30px] flex-col pt-0.5">
          <IconButton label="Dynamic zoom" className={cell}>
            <SmallLens><path d="m9.500 3.500 4 4.500h-8zM9.500 15.500l4-4.500h-8z" fill="#3a98e8" /></SmallLens>
          </IconButton>
          <IconButton label="Loupe" className={cell}>
            <SmallLens><path d="M5.500 8V5.500H8M11 5.500h2.500V8M13.500 11v2.500H11M8 13.500H5.500V11" stroke="#3a98e8" strokeWidth="1.500" /></SmallLens>
          </IconButton>
          <IconButton label="Pan and zoom" className={cell}><PageLensIcon /></IconButton>
        </div>
      </Group>
      <GroupRule />
      <Group>
        <BigButton className="w-[55px]" icon={<RotateIcon />} text={"Rotate\nView"} arrow />
      </Group>
      <GroupRule />
      <Group label="Page Display">
        <div className="flex w-[126px] flex-col gap-[9px] pt-[11px] pl-0.5">
          <div className="flex">
            <IconButton label="Single page" className={clsx(cell, pressed)}><SinglePage /></IconButton>
            <IconButton label="Continuous" className={cell}><ContinuousPage /></IconButton>
            <IconButton label="Two pages" className={cell}><TwoPages /></IconButton>
            <IconButton label="Two pages continuous" className={cell}><TwoContinuous /></IconButton>
          </div>
          <div className="flex items-center">
            <IconButton label="Show gaps" className={clsx(cell, pressed)}><ContinuousPage arrow /></IconButton>
            <IconButton label="Spread pages" className={cell}><SplitPagesIcon /></IconButton>
            <IconButton label="Right to left" className={cell}><TwoPages numbered /></IconButton>
            <IconButton label="Page layout" className={cell}><PageLayoutIcon /></IconButton>
            <Chevron />
          </div>
        </div>
        <Rule />
        <div className="flex w-[127px] flex-col pt-0.5 pl-px">
          <div className="flex items-center">
            <IconButton label="Rulers" className={cell}><RulerIcon /></IconButton>
            <IconButton label="Guides" className={cell}><GuidesIcon /></IconButton>
            <IconButton label="Snap" className={cell}><MagnetIcon /></IconButton>
            <span className="flex w-3 justify-center"><Chevron /></span>
            <IconButton label="Reading mode" className={cell}><GlassesIcon /></IconButton>
          </div>
          <div className="flex">
            <IconButton label="Grid" className={cell}><GridEyeIcon /></IconButton>
            <IconButton label="Transparency grid" className={cell}><CheckerboardIcon /></IconButton>
            <IconButton label="Page transitions" className={cell}><WrapIcon /></IconButton>
            <IconButton label="Night mode" className="ml-3 h-7 w-7"><MoonIcon /></IconButton>
          </div>
          <div className="flex">
            <IconButton label="Cursor guides" className={cell}><CrossCursorIcon /></IconButton>
            <IconButton label="Coordinates" className={cell}><XyIcon /></IconButton>
            <IconButton label="Page gaps" className={cell}><PageGapIcon /></IconButton>
          </div>
        </div>
      </Group>
      <GroupRule />
      <BigButton className="h-[86px] w-[54px]" icon={<SplitIcon />} text="Split" arrow />
      <GroupRule />
      <Group>
        <CardButton className="mx-0.5 w-[53px]" active icon={<WindowsIcon fill="#fbf5e4" />} text="Window" />
      </Group>
      <GroupRule />
      <Group>
        <CardButton className="mx-3 w-[61px] border-transparent" icon={<SpeakerIcon />} text={"Read Out\nLoud"} />
      </Group>
      <GroupRule />
    </div>
  );
}

function DocumentTabs() {
  return (
    <div className="flex h-[34px] shrink-0 border-b-2 border-[#fbe3ab] bg-[#8c8c8c] bg-[radial-gradient(#ffffff18_1px,transparent_1px)] bg-[size:3px_3px]">
      <div className="flex h-8 w-[92px] shrink-0 flex-col justify-between rounded-tr-sm bg-[#fbe5b3] px-1 pb-px">
        <div className="flex pt-1">
          <button type="button" className="pt-1">Architecture</button>
          <IconButton label="Close tab" className="ml-auto h-2 w-2"><Svg w={6}><path d="m.5.5 5 5M5.500.5l-5 5" stroke="#222" strokeWidth="1.400" /></Svg></IconButton>
        </div>
        <span className="h-0.5 bg-[#998d6e]" />
      </div>
      <IconButton label="New tab" className="mt-[3px] ml-0.5 h-[27px] w-[27px] rounded-sm bg-[#cbcbcb]">
        <Svg w={16}><path d="M0 8.500h16M8.500 0v16" stroke="#333" /></Svg>
      </IconButton>
    </div>
  );
}

const CollapseIcon = () => (
  <Svg w={8}>
    <path d="M1 1v6M6.500 1 3.500 4l3 3" stroke="#333" strokeWidth="1.500" />
  </Svg>
);

function Sidebar() {
  return (
    <aside className="flex w-[31px] shrink-0 flex-col items-center bg-[#f3f3f3]">
      <button type="button" aria-label="Collapse panes" className="flex h-3 w-full items-center justify-end bg-[#e2e2e2] pr-0.5"><CollapseIcon /></button>
      <span className="my-px h-[9px] w-[26px] shrink-0 bg-[radial-gradient(#a5a5a5_0.8px,transparent_0.9px)] bg-[size:3px_3px]" />
      {panes.map((pane) => (
        <IconButton key={pane.label} label={pane.label} className="relative h-7 w-7">
          <pane.icon />
          {pane.dot && <OpenDot />}
        </IconButton>
      ))}
      <span className="my-px h-px w-7 shrink-0 bg-[#c4c4c4]" />
      {structurePanes.map((pane) => (
        <IconButton key={pane.label} label={pane.label} className="h-7 w-7"><pane.icon /></IconButton>
      ))}
      <IconButton label="More panes" className="h-3 w-7">
        <Svg w={8}><path d="M1 0l3 3 3-3M1 4l3 3 3-3" stroke="#333" strokeWidth="1.500" /></Svg>
      </IconButton>
    </aside>
  );
}

function Drawing() {
  return (
    <svg viewBox="0 0 452 378" width="452" height="378" className="block" fill="none" stroke="#111" role="img" aria-label="Architecture drawing">
      <defs>
        <pattern id="concrete" width="13" height="17" patternUnits="userSpaceOnUse">
          <path
            d="M1 1h2v1H1zM5 3h1v2H5zM9 1h1v1H9zM11 4h2v2h-2zM2 6h1v1H2zM7 7h2v1H7zM4 9h1v1H4zM10 10h2v1h-2zM1 11h2v2H1zM6 12h1v1H6zM8 14h2v1H8zM3 15h1v1H3zM12 14h1v2h-1zM7 0h1v1H7zM0 4h1v1H0zM9 5h1v1H9z"
            fill="#111"
            stroke="none"
          />
        </pattern>
      </defs>
      <g transform="translate(-227 -202)">
        <path d="M396 330Q360 376 340 428l13 2Q366 395 392 353z" fill="url(#concrete)" />
        <path d="M337 429Q320 480 320 536q1 24 5 44h12q-5-22-5-44 0-50 14-108z" fill="url(#concrete)" strokeWidth="1.200" />
        <path d="M410 342q-36 44-52 86M355 428Q368 394 398 352" strokeWidth=".8" />
        <path d="M338 428l-5-2Q315 478 315.500 530q0 28 4 50" />
        <path d="M338 430Q321 482 321.500 536q0 22 4 44" strokeWidth="1.600" />
        <path d="M340 430.500h300M343 447h297" strokeWidth="1.700" />
        <path d="M343 433h10v4h-10zM345 438v8h8" strokeWidth="1.800" />
        <path d="M352.500 428v19" strokeWidth="3.500" />
        <path d="m353 432 26 9M356 430l-3 16" />
        <path d="M376 447Q352 510 366 578M361 578l10 1" strokeWidth="1.300" />
        <path d="M320 536.500h320" />
        <path d="M317 393.500h14l22 38M288 417.500h24v13M308 430.500h20M282 504.500h7l27 7M312 509l4 2-4 2M338 526l-8 4" strokeWidth=".9" />
        <g fill="#444" stroke="none" fontFamily="Liberation Sans, sans-serif" fontWeight="bold" fontSize="4">
          <text x="261" y="395">1 3/4"x11 7/8" SCL 'CURVED'</text>
          <text x="261" y="400">LEDGER, C/W ANCHOR</text>
          <text x="261" y="404">BOLTS CAST INTO CONC</text>
          <text x="261" y="409">CORBEL</text>
          <text x="261" y="419">POUR JOINT</text>
          <text x="253" y="506">FORM SET #2</text>
          <text x="336" y="528">8"</text>
          <text transform="translate(360 514) rotate(-90)">10' - 0"</text>
        </g>
      </g>
    </svg>
  );
}

function Canvas() {
  return (
    <div className="flex min-h-0 flex-1">
      <main
        aria-label="Document"
        className="flex min-w-0 flex-1 justify-center overflow-hidden border border-[#444] bg-[radial-gradient(#ffffff14_1px,transparent_1px),linear-gradient(#8e8e8e,#a4a4a4_30%,#acacac_60%,#a9a9a9)] bg-[size:3px_3px,100%_100%] pt-1 shadow-[inset_0_0_6px_#666]"
      >
        <div className="shrink-0 border-t border-l border-[#222] bg-white shadow-[0_0_10px_3px_#666]">
          <Drawing />
        </div>
      </main>
      <div className="flex w-4 shrink-0 flex-col items-center justify-between bg-[#f0f0f0] pt-3 pb-1">
        <span className="h-[52px] w-[5px] rounded-full bg-[#999]" />
        <Chevron />
      </div>
    </div>
  );
}

const StatusGrip = () => (
  <span className="flex w-3 shrink-0 flex-col items-start gap-px">
    <span className="h-4 w-[9px] bg-[radial-gradient(#a5a5a5_0.8px,transparent_0.9px)] bg-[size:3px_3px]" />
    <CollapseIcon />
  </span>
);

function StatusBar() {
  const [page, setPage] = useState("1");
  const [scale, setScale] = useState(0);

  return (
    <footer className="flex h-8 shrink-0 items-center border-b border-[#aaa] bg-[#f3f3f3] pl-0.5">
      <StatusGrip />
      <button type="button" className="flex h-7 w-28 shrink-0 items-center gap-1">
        <OptionsIcon />
        Options...
        <Chevron />
      </button>
      <StatusGrip />
      <IconButton label="First page" className="w-7"><CircleIcon d="M7.500 6v10M14.500 6l-4.500 5 4.500 5" color="#9accf5" ring="#aaa" /></IconButton>
      <IconButton label="Previous page" className="w-7"><CircleIcon d="m13 6.500-4.500 4.500 4.500 4.500" color="#9accf5" ring="#aaa" /></IconButton>
      <label className="mx-px flex h-[22px] w-24 shrink-0 items-center rounded-xs border border-[#aaa] bg-white pr-0.5">
        <input aria-label="Page number" value={page} onChange={(e) => setPage(e.target.value)} className="w-full min-w-0 bg-transparent text-right outline-none" />
        <span className="pl-px text-sm">/</span>
        <span className="pb-1">4</span>
      </label>
      <IconButton label="Next page" className="w-7"><CircleIcon d="m9.500 6.500 4.500 4.500-4.500 4.500" /></IconButton>
      <IconButton label="Last page" className="w-7"><CircleIcon d="m7 6 4.500 5L7 16M15 6v10" /></IconButton>
      <div className="ml-auto flex items-center">
        <input
          type="range"
          aria-label="Zoom"
          min={0}
          max={100}
          value={scale}
          onChange={(e) => setScale(Number(e.target.value))}
          className="mr-1 w-[87px] appearance-none bg-transparent bg-[linear-gradient(#666,#666),linear-gradient(#666,#666)] bg-[size:1px_2px] bg-[position:36px_3px,36px_13px] bg-no-repeat [&::-webkit-slider-runnable-track]:h-[3px] [&::-webkit-slider-runnable-track]:rounded-full [&::-webkit-slider-runnable-track]:bg-[#bbb] [&::-webkit-slider-thumb]:-mt-2 [&::-webkit-slider-thumb]:size-[18px] [&::-webkit-slider-thumb]:appearance-none [&::-webkit-slider-thumb]:rounded-full [&::-webkit-slider-thumb]:border [&::-webkit-slider-thumb]:border-[#777] [&::-webkit-slider-thumb]:bg-[radial-gradient(#808080_3px,#fafafa_4px)]"
        />
        <IconButton label="Zoom in" className="w-6"><CircleIcon d="M5 11h12M11 5v12" /></IconButton>
        <span className="ml-1.5 flex"><StatusGrip /></span>
        <IconButton label="View mode" className="ml-1 w-4">
          <Svg w={16} h={12}>
            <path d="M.5.5h15v11H.5z" fill="#fff" stroke="#bbb" />
            <path d="M0 0h16v2H0z" fill="#bbb" />
            <path d="M5 3h6v7H5z" fill="#9ac5ea" />
            <path d="M2 4.500h2M2 6.500h2M2 8.500h2M12 4.500h2M12 6.500h2M12 8.500h2" stroke="#ccc" />
          </Svg>
        </IconButton>
        <IconButton label="View mode list" className="ml-1 w-4"><Chevron color="#aaa" /></IconButton>
        <IconButton label="More" className="h-[30px] w-[11px] bg-[#e4e4e4] pb-4">
          <Svg w={8}><path d="M1.500 1 4 3.500 6.500 1M.5 7.500h7" stroke="#333" strokeWidth="1.500" /></Svg>
        </IconButton>
      </div>
    </footer>
  );
}

function MenuRow({ pane, active }: { pane: Pane; active?: boolean }) {
  return (
    <button
      type="button"
      role="menuitem"
      className={clsx("flex h-7 w-full items-center pr-2.5 pl-4 text-left", active && "rounded-xs bg-[#f4dfa8]")}
    >
      <span className="relative flex h-7 w-6 shrink-0 items-center justify-center">
        <pane.icon />
        {pane.dot && <OpenDot />}
      </span>
      <span className="flex-1 pl-[3px]">{pane.label}</span>
      <span>{pane.keys}</span>
    </button>
  );
}

const MenuRule = () => <hr className="my-px border-[#c8c8c8]" />;

function PanesMenu() {
  return (
    <div role="menu" aria-label="Panes" className="absolute top-[152px] right-[182px] w-[331px] rounded-t-md border border-[#b0b0b0] bg-[#f3f3f3] px-[3px] pt-1 shadow-[0_2px_8px_#0000007a]">
      {panes.map((pane) => (
        <MenuRow key={pane.label} pane={pane} active={pane.label === "Signatures"} />
      ))}
      <MenuRule />
      {[...structurePanes, ...accessibilityPanes].map((pane) => (
        <MenuRow key={pane.label} pane={pane} />
      ))}
      <MenuRule />
      <MenuRow pane={{ label: "Show Loupe Window", keys: "CTRL+SHIFT+ALT+L", icon: LoupeIcon }} />
    </div>
  );
}

function WindowFlyout() {
  return (
    <div className="absolute top-[144px] right-0 flex h-[93px] w-[187px] rounded-l-sm border border-[#c4c4c4] bg-[#f3f3f3] pt-[3px] shadow-[0_2px_6px_#00000070]">
      <div className="flex w-[131px] flex-col items-start pl-1">
        <button type="button" className="flex h-7 items-center gap-0.5 px-0.5 whitespace-nowrap">
          <WindowsIcon />
          Document Tabs
          <Chevron />
        </button>
        <button type="button" className={clsx("flex h-7 items-center gap-1 px-px", pressed)}>
          <PanesIcon />
          Panes
          <Chevron />
        </button>
        <button type="button" disabled className="flex h-7 items-center gap-1 px-px text-[#8c8c8c]">
          <PortfolioIcon />
          Portfolio
          <Chevron color="#aaa" />
        </button>
      </div>
      <span className="h-[84px] w-px bg-[#c4c4c4]" />
      <button type="button" className="flex flex-1 flex-col items-center pt-1.5">
        <span className="mb-2"><UiThemeIcon /></span>
        <Caption text={"UI\nTheme"} arrow />
      </button>
    </div>
  );
}

export default function App() {
  return (
    <div className="relative flex h-screen flex-col overflow-hidden rounded-lg border-t border-l border-[#a8a8a8] bg-[#d5d5d5] font-['Open_Sans','Noto_Sans',sans-serif] text-xs text-[#111]">
      <TitleBar />
      <TabRow />
      <Ribbon />
      <DocumentTabs />
      <div className="flex min-h-0 flex-1">
        <Sidebar />
        <div className="flex min-w-0 flex-1 flex-col">
          <Canvas />
          <StatusBar />
        </div>
      </div>
      <WindowFlyout />
      <PanesMenu />
    </div>
  );
}
